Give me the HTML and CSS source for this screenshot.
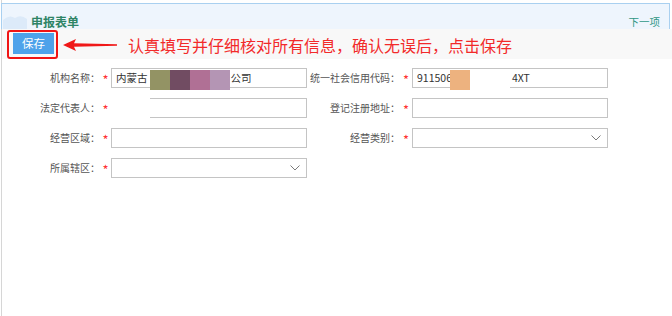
FILE: index.html
```html
<!DOCTYPE html>
<html lang="zh-CN">
<head>
    <meta charset="UTF-8">
    <title>申报表单</title>
    <link rel="stylesheet" href="styles.css">
</head>
<body>
    <div class="page">
        <div class="panel-head">
            <svg class="head-deco" width="27" height="15" viewBox="0 0 27 15">
                <path d="M0 15 V6 Q6 0 12 4 Q18 0 24 5 V15 Z" fill="#dceaf9"/>
            </svg>
            <span class="title">申报表单</span>
            <span class="next">下一项</span>
        </div>

        <div class="toolbar">
            <div class="mark">
                <button class="btn-save">保存</button>
            </div>
            <svg class="arrow" width="54" height="14" viewBox="0 0 54 14">
                <path d="M0 7 L13 1 L11 5.3 L54 6.2 L54 7.8 L11 8.7 L13 13 Z" fill="#f01818"/>
            </svg>
            <span class="tip">认真填写并仔细核对所有信息，确认无误后，点击保存</span>
        </div>

        <div class="form">
            <label class="lbl">机构名称：</label>
            <span class="req">*</span>
            <div class="field">内蒙古<span class="gap"></span>公司</div>
            <label class="lbl">统一社会信用代码：</label>
            <span class="req">*</span>
            <div class="field">911506<span class="gap2"></span>4XT</div>

            <label class="lbl">法定代表人：</label>
            <span class="req">*</span>
            <div class="field"></div>
            <label class="lbl">登记注册地址：</label>
            <span class="req">*</span>
            <div class="field"></div>

            <label class="lbl">经营区域：</label>
            <span class="req">*</span>
            <div class="field"></div>
            <label class="lbl">经营类别：</label>
            <span class="req">*</span>
            <div class="field select">
                <svg width="10" height="6" viewBox="0 0 10 6"><polyline points="0.5,0.5 5,5 9.5,0.5" fill="none" stroke="#7a7a7a" stroke-width="1"/></svg>
            </div>

            <label class="lbl">所属辖区：</label>
            <span class="req">*</span>
            <div class="field select">
                <svg width="10" height="6" viewBox="0 0 10 6"><polyline points="0.5,0.5 5,5 9.5,0.5" fill="none" stroke="#7a7a7a" stroke-width="1"/></svg>
            </div>

            <!-- 打码区域 -->
            <div class="mask mask-name">
                <i style="background:#939364"></i><i style="background:#714c62"></i><i style="background:#b07095"></i><i style="background:#b495b4"></i>
            </div>
            <div class="mask mask-white"></div>
            <div class="mask mask-code"><i style="background:#edb27f"></i><i class="wide" style="background:#fff"></i></div>
        </div>
    </div>
</body>
</html>
```

FILE: styles.css
```css
body {
    margin: 0;
    background: #fff;
    font-family: "Noto Sans CJK SC", "Noto Sans", sans-serif;
}
.page {
    margin-left: 1px;
    padding-top: 3px;
    border-left: 1px solid #d6d6d6;
    height: 313px;
}
.panel-head {
    position: relative;
    height: 25px;
    margin: 0 2px 0 -1px;
    background: #eef5fd;
    border-top: 1px solid #a9d0f0;
    border-right: 1px solid #a9d0f0;
    border-left: 1px solid #a9d0f0;
    display: flex;
    align-items: flex-end;
    justify-content: space-between;
    padding: 0 9px 0 29px;
}
.head-deco {
    position: absolute;
    left: 1px;
    bottom: 0;
}
.title {
    position: relative;
    top: 1px;
    font-size: 12px;
    font-weight: bold;
    color: #2e8466;
    line-height: 16px;
}
.next {
    position: relative;
    top: 1px;
    font-size: 10.5px;
    color: #2f9584;
    line-height: 16px;
}
.toolbar {
    height: 30px;
    background: #f8f8f8;
    display: flex;
    align-items: center;
    padding-left: 5px;
}
.mark {
    border: 2px solid #f01414;
    border-radius: 3px;
    padding: 1px 2px 3px 4px;
    margin-top: 1px;
}
.btn-save {
    display: block;
    width: 41px;
    height: 21px;
    padding: 0;
    border: none;
    background: #4ea2ea;
    color: #fff;
    font-family: "Noto Sans CJK SC", sans-serif;
    font-size: 11.5px;
    line-height: 21px;
}
.arrow {
    margin-left: 5px;
    margin-top: 2px;
}
.tip {
    margin-left: 11px;
    margin-top: 2px;
    font-size: 16px;
    line-height: 20px;
    color: #f22a2a;
}
.form {
    position: relative;
    display: grid;
    grid-template-columns: 98px 11px 196px 93px 12px 196px;
    grid-auto-rows: 20px;
    row-gap: 10px;
    padding-top: 9px;
    font-size: 10px;
}
.lbl {
    text-align: right;
    color: #555;
    line-height: 20px;
    white-space: nowrap;
}
.req {
    text-align: center;
    color: #f33;
    font-size: 13px;
    line-height: 24px;
}
.field {
    border: 1px solid #c4c4c4;
    box-sizing: border-box;
    font-size: 10.5px;
    color: #333;
    line-height: 18px;
    padding-left: 4px;
    white-space: nowrap;
    overflow: hidden;
}
.gap {
    display: inline-block;
    width: 83px;
}
.gap2 {
    display: inline-block;
    width: 60px;
}
.select {
    display: flex;
    align-items: center;
    justify-content: flex-end;
    padding-right: 6px;
}
.mask {
    position: absolute;
    display: flex;
}
.mask i {
    display: block;
    width: 20px;
    height: 20px;
}
.mask i.wide {
    width: 40px;
}
.mask-name {
    left: 148px;
    top: 11px;
}
.mask-white {
    left: 106px;
    top: 30px;
    width: 42px;
    height: 39px;
    background: #fff;
}
.mask-code {
    left: 448px;
    top: 11px;
}
```
